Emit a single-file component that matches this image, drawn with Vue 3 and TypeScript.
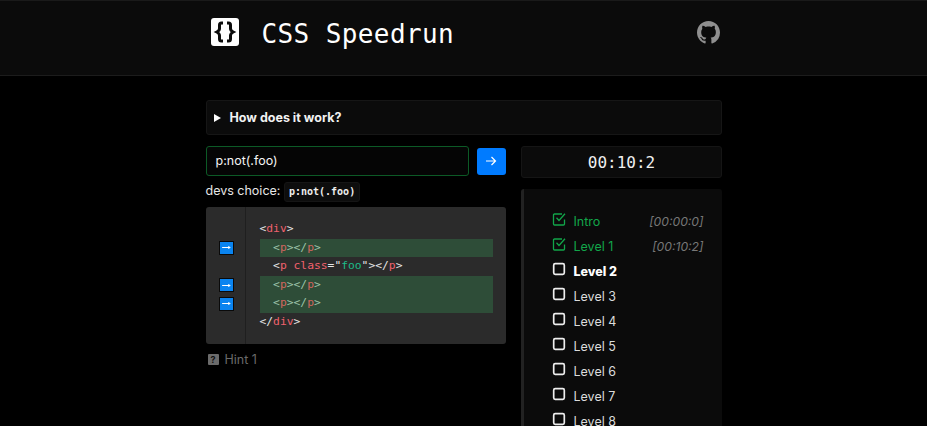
<script setup lang="ts">
interface Level { name: string; time?: string; done?: boolean; current?: boolean }
const levels: Level[] = [
  { name: 'Intro', time: '[00:00:0]', done: true },
  { name: 'Level 1', time: '[00:10:2]', done: true },
  { name: 'Level 2', current: true },
  { name: 'Level 3' },
  { name: 'Level 4' },
  { name: 'Level 5' },
  { name: 'Level 6' },
  { name: 'Level 7' },
  { name: 'Level 8' },
]
const gutter = [false, true, false, true, true, false]
</script>

<template>
  <div class="page">
    <header class="header">
      <div class="header-inner">
        <div class="brand">
          <svg class="logo" viewBox="0 0 28 28" width="28" height="28" aria-hidden="true">
            <rect width="28" height="28" rx="3" fill="#fff" />
            <path d="M12 5h-1.500C9 5 8.500 5.800 8.500 7v3.500c0 1.300-.8 2.500-2.700 3.500 1.900 1 2.700 2.200 2.700 3.500V21c0 1.200.5 2 2 2H12M16 5h1.500c1.500 0 2 .8 2 2v3.500c0 1.300.8 2.500 2.700 3.500-1.900 1-2.700 2.200-2.700 3.500V21c0 1.200-.5 2-2 2H16" fill="none" stroke="#0b0b0b" stroke-width="3" />
          </svg>
          <h1 class="title">CSS Speedrun</h1>
        </div>
        <svg class="github" viewBox="0 0 16 16" width="23" height="23" aria-hidden="true">
          <path fill="#8f8f8f" d="M8 0C3.58 0 0 3.58 0 8c0 3.54 2.29 6.53 5.47 7.59.4.07.55-.17.55-.38 0-.19-.01-.82-.01-1.49-2.01.37-2.53-.49-2.69-.94-.09-.23-.48-.94-.82-1.13-.28-.15-.68-.52-.01-.53.63-.01 1.08.58 1.23.82.72 1.21 1.87.87 2.33.66.07-.52.28-.87.51-1.07-1.78-.2-3.64-.89-3.64-3.95 0-.87.31-1.59.82-2.15-.08-.2-.36-1.02.08-2.12 0 0 .67-.21 2.2.82.64-.18 1.32-.27 2-.27s1.36.09 2 .27c1.53-1.04 2.2-.82 2.2-.82.44 1.1.16 1.92.08 2.12.51.56.82 1.27.82 2.15 0 3.07-1.87 3.75-3.65 3.95.29.25.54.73.54 1.48 0 1.07-.01 1.93-.01 2.2 0 .21.15.46.55.38A8.01 8.01 0 0 0 16 8c0-4.42-3.58-8-8-8z" />
        </svg>
      </div>
    </header>

    <main class="main">
      <div class="details">
        <span class="caret"></span>
        <span class="details-label">How does it work?</span>
      </div>

      <div class="columns">
        <section class="left">
          <div class="form">
            <div class="input">p:not(.foo)</div>
            <button class="go" type="button" aria-label="Submit">
              <svg viewBox="0 0 12 12" width="12" height="12" aria-hidden="true">
                <path d="M1 6h9.500M6.500 2l4 4-4 4" fill="none" stroke="#fff" stroke-width="1.200" />
              </svg>
            </button>
          </div>
          <p class="choice">devs choice: <code class="choice-code">p:not(.foo)</code></p>

          <div class="code">
            <div class="gutter">
              <div v-for="(on, i) in gutter" :key="i" class="gutter-row">
                <span v-if="on" class="marker">
                  <svg viewBox="0 0 10 8" width="9" height="7" aria-hidden="true">
                    <path d="M0 4h8.500M7 2.800 8.800 4 7 5.200" fill="none" stroke="#fff" stroke-width="1.200" />
                  </svg>
                </span>
              </div>
            </div>
            <pre class="source"><span class="line"><span class="p">&lt;</span><span class="t">div</span><span class="p">&gt;</span></span><span class="line hl">  <span class="p">&lt;</span><span class="t">p</span><span class="p">&gt;&lt;/</span><span class="t">p</span><span class="p">&gt;</span></span><span class="line">  <span class="p">&lt;</span><span class="t">p</span> <span class="t">class</span><span class="p">=</span><span class="s"><span class="p">"</span>foo<span class="p">"</span></span><span class="p">&gt;&lt;/</span><span class="t">p</span><span class="p">&gt;</span></span><span class="line hl">  <span class="p">&lt;</span><span class="t">p</span><span class="p">&gt;&lt;/</span><span class="t">p</span><span class="p">&gt;</span></span><span class="line hl">  <span class="p">&lt;</span><span class="t">p</span><span class="p">&gt;&lt;/</span><span class="t">p</span><span class="p">&gt;</span></span><span class="line"><span class="p">&lt;/</span><span class="t">div</span><span class="p">&gt;</span></span></pre>
          </div>

          <div class="hint">
            <span class="hint-icon">?</span>
            <span>Hint 1</span>
          </div>
        </section>

        <aside class="right">
          <div class="timer">00:10:2</div>
          <ul class="levels">
            <li
              v-for="level in levels"
              :key="level.name"
              class="level"
              :class="{ done: level.done, current: level.current }"
            >
              <span class="check">
                <svg v-if="level.done" viewBox="0 0 14 14" width="14" height="14" aria-hidden="true">
                  <path d="M12.500 7.500V12a1 1 0 0 1-1 1H2.500a1 1 0 0 1-1-1V3a1 1 0 0 1 1-1H10" fill="none" stroke="currentColor" stroke-width="1.300" />
                  <path d="M4.500 5.800 7 8.500 13 1.800" fill="none" stroke="currentColor" stroke-width="1.300" />
                </svg>
                <svg v-else viewBox="0 0 14 14" width="14" height="14" aria-hidden="true">
                  <rect x="1.700" y="1.700" width="10.600" height="10.600" rx="1.500" fill="none" stroke="#eee" stroke-width="1.700" />
                </svg>
              </span>
              <span class="level-name">{{ level.name }}</span>
              <em v-if="level.time" class="level-time">{{ level.time }}</em>
            </li>
          </ul>
        </aside>
      </div>
    </main>
  </div>
</template>

<style>
html, body { background: #000; overflow: hidden; height: 100%; }
</style>

<style scoped>
.page {
  width: 927px;
  height: 426px;
  overflow: hidden;
  background: #000;
  color: #fff;
  font-family: Inter, "Liberation Sans", sans-serif;
}
.header {
  height: 76px;
  box-sizing: border-box;
  background: #0b0b0b;
  border-top: 1px solid #1a1a1a;
  border-bottom: 1px solid #1c1c1c;
}
.header-inner {
  width: 516px;
  margin: 0 auto;
  padding-top: 17px;
  display: flex;
  justify-content: space-between;
  box-sizing: border-box;
}
.brand { display: flex; align-items: flex-start; margin-left: 5px; }
.logo { display: block; }
.title {
  margin: 2px 0 0 23px;
  font-family: "DejaVu Sans Mono", monospace;
  font-size: 26px;
  line-height: 29px;
  font-weight: 400;
  letter-spacing: 0.4px;
  color: #fff;
}
.github { margin-top: 3px; margin-right: 2px; }

.main { width: 516px; margin: 24px auto 0; }
.details {
  height: 35px;
  box-sizing: border-box;
  background: #0b0b0b;
  border: 1px solid #161616;
  border-radius: 3px;
  display: flex;
  align-items: center;
  padding-left: 7px;
}
.caret {
  width: 0;
  height: 0;
  border-left: 7px solid #fff;
  border-top: 4px solid transparent;
  border-bottom: 4px solid transparent;
  margin-right: 9px;
}
.details-label { font-size: 12.500px; font-weight: 700; color: #f2f2f2; }

.columns { display: flex; gap: 15px; margin-top: 11px; }
.left { width: 300px; }
.right { width: 201px; }

.form { display: flex; align-items: center; gap: 8px; height: 30px; }
.input {
  flex: 1;
  height: 30px;
  box-sizing: border-box;
  background: #050505;
  border: 1px solid #0c5a26;
  border-radius: 3px;
  padding-left: 9px;
  font-size: 12.500px;
  line-height: 27px;
  color: #f5f5f5;
}
.go {
  width: 29px;
  height: 27px;
  border: 0;
  border-radius: 3px;
  background: #007bff;
  padding: 0;
  display: flex;
  align-items: center;
  justify-content: center;
}
.choice {
  margin: 5px 0 0;
  height: 20px;
  font-size: 12.500px;
  line-height: 20px;
  color: #e6e6e6;
  white-space: pre-wrap;
}
.choice-code {
  display: inline-block;
  height: 18px;
  line-height: 18px;
  padding: 0 4px;
  background: #0d0d0d;
  border: 1px solid #151515;
  border-radius: 3px;
  font-family: "DejaVu Sans Mono", monospace;
  font-size: 10px;
  font-weight: 700;
  color: #eee;
}

.code {
  margin-top: 6px;
  height: 137px;
  display: flex;
  background: #2b2b2b;
  border-radius: 3px;
  overflow: hidden;
}
.gutter {
  width: 40px;
  padding-top: 13px;
  box-sizing: border-box;
  border-right: 1px solid #1f1f1f;
}
.gutter-row {
  height: 18.600px;
  display: flex;
  align-items: center;
  justify-content: center;
  padding-left: 3px;
}
.marker {
  width: 15px;
  height: 14px;
  box-sizing: border-box;
  background: #0a84f0;
  border: 1px solid #0a0a0a;
  display: flex;
  align-items: center;
  justify-content: center;
}
.source {
  margin: 0;
  padding: 13px 13px 0 14px;
  flex: 1;
  font-family: "DejaVu Sans Mono", monospace;
  font-size: 11.300px;
  line-height: 18.600px;
  color: #e0e0e0;
}
.line { display: block; height: 18.600px; }
.hl { background: #2e4d38; }
.p { color: #e6e6e6; }
.t { color: #f0616d; }
.s { color: #1dbd8a; }
.hl .p { color: #9cc2a8; }
.hl .t { color: #d1665f; }

.hint {
  margin-top: 8px;
  display: flex;
  align-items: center;
  gap: 6px;
  padding-left: 2px;
  font-size: 12.500px;
  color: #6a6a6a;
}
.hint-icon {
  width: 11px;
  height: 11px;
  background: #6b6b6b;
  color: #111;
  border-radius: 1px;
  font-size: 9px;
  font-weight: 700;
  line-height: 11px;
  text-align: center;
}

.timer {
  height: 32px;
  box-sizing: border-box;
  background: #0b0b0b;
  border: 1px solid #151515;
  border-radius: 3px;
  text-align: center;
  font-family: "DejaVu Sans Mono", monospace;
  font-size: 16px;
  line-height: 32px;
  padding-left: 1px;
  color: #f0f0f0;
}
.levels {
  list-style: none;
  margin: 11px 0 0;
  padding: 20px 18px 0 28px;
  background: #0b0b0b;
  border-left: 3px solid #222;
  border-radius: 3px 3px 0 0;
}
.level {
  height: 25px;
  display: flex;
  align-items: center;
  font-size: 12.500px;
  color: #dcdcdc;
}
.check { width: 14px; height: 14px; margin-right: 8px; margin-top: -5px; }
.check svg { display: block; }
.level-time { margin-left: auto; color: #777; font-style: italic; font-size: 12.200px; }
.done { color: #12a64a; }
.current { color: #fff; font-weight: 800; }
</style>
